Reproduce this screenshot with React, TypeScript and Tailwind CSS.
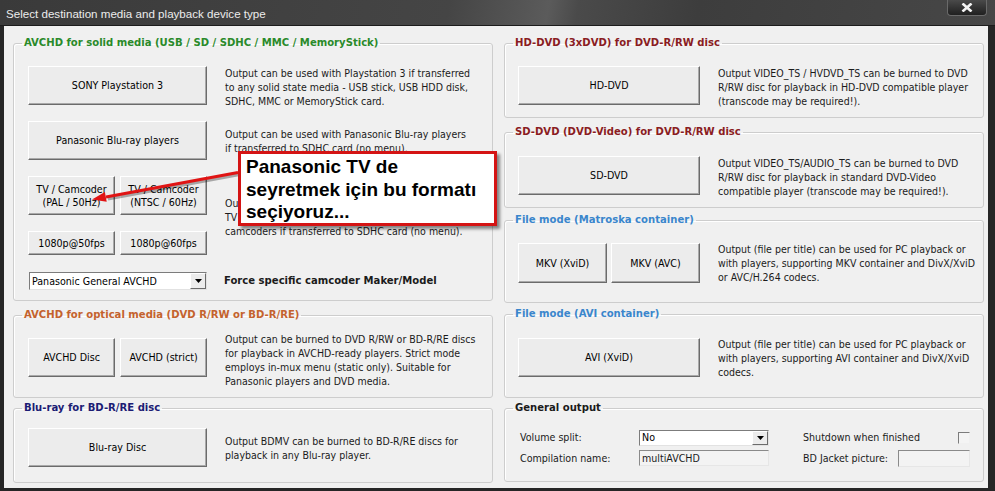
import React from "react";

const btn =
  "bg-[#ececec] border border-t-white border-l-white border-b-[#6b6b6b] border-r-[#6b6b6b] shadow-[inset_-1px_-1px_0_#a9a9a9] text-[10.6px] leading-[13px] text-black flex items-center justify-center text-center";

const desc = "ml-[18px] text-[10.5px] leading-[14px] text-[#1b1b1b] whitespace-nowrap";

function Group({
  title,
  color,
  className,
  children,
}: {
  title: string;
  color: string;
  className: string;
  children: React.ReactNode;
}) {
  return (
    <fieldset
      className={`border border-[#cdcdcd] rounded-[3px] shadow-[inset_1px_1px_0_#ffffff] ${className}`}
    >
      <legend
        className={`ml-[8px] px-[2px] text-[11.2px] leading-[14px] font-bold ${color}`}
      >
        {title}
      </legend>
      {children}
    </fieldset>
  );
}

function ComboArrow() {
  return (
    <div className="w-[16px] h-full bg-[#ececec] border border-t-white border-l-white border-b-[#6b6b6b] border-r-[#6b6b6b] flex items-center justify-center">
      <svg width="7" height="4" viewBox="0 0 7 4">
        <polygon points="0,0 7,0 3.5,4" fill="#000" />
      </svg>
    </div>
  );
}

function Combo({ value, className }: { value: string; className: string }) {
  return (
    <div
      className={`bg-white border border-t-[#7c7c7c] border-l-[#7c7c7c] border-b-[#e2e2e2] border-r-[#e2e2e2] flex items-center justify-between ${className}`}
    >
      <span className="pl-[2px] text-[10.6px] leading-[13px] text-black">{value}</span>
      <ComboArrow />
    </div>
  );
}

function Line(props: { lines: string[]; className?: string }) {
  return (
    <div className={`${desc} ${props.className ?? ""}`}>
      {props.lines.map((l, i) => (
        <div key={i}>{l}</div>
      ))}
    </div>
  );
}

export default function App() {
  return (
    <div className="relative w-[995px] h-[491px] bg-[#262626] flex flex-col overflow-hidden font-['DejaVu_Sans_Condensed','Liberation_Sans',sans-serif]">
      {/* title bar */}
      <div className="h-[26px] flex items-start justify-between bg-[linear-gradient(100deg,#3a3a3a_0%,#454545_45%,#5b5b5b_55%,#4a4a4a_58%,#3d3d3d_70%,#474747_100%)] border-b border-[#1c1c1c]">
        <span className="pl-[6px] pt-[7px] text-[11.6px] leading-[14px] text-[#ececec] font-['Liberation_Sans',sans-serif]">
          Select destination media and playback device type
        </span>
        <div className="mr-[8px] w-[40px] h-[16px] rounded-b-[4px] border border-t-0 border-[#6a6a6a] bg-gradient-to-b from-[#4a4a4a] to-[#202020] flex items-center justify-center">
          <svg width="12" height="9" viewBox="0 0 12 9">
            <path d="M1.5 0.5 L10.5 8.5 M10.5 0.5 L1.5 8.5" stroke="#f4f4f4" strokeWidth="2.6" />
          </svg>
        </div>
      </div>

      {/* client */}
      <div className="flex-1 ml-[4px] mr-[7px] mb-[3px] bg-[#f0f0f0] flex gap-[11px] pl-[9px] pt-[10px]">
        {/* left column */}
        <div className="w-[480px] flex flex-col">
          <Group title="AVCHD for solid media (USB / SD / SDHC / MMC / MemoryStick)" color="text-[#2a8a2a]" className="h-[265px]">
            <div className="pt-[16px] pl-[14px] flex flex-col">
              <div className="flex items-center h-[39px]">
                <div className={`${btn} w-[179px] h-[39px]`}>SONY Playstation 3</div>
                <Line
                  className="mt-[2px]"
                  lines={[
                    "Output can be used with Playstation 3 if transferred",
                    "to any solid state media - USB stick, USB HDD disk,",
                    "SDHC, MMC or MemoryStick card.",
                  ]}
                />
              </div>
              <div className="flex items-center h-[39px] mt-[16px]">
                <div className={`${btn} w-[179px] h-[39px]`}>Panasonic Blu-ray players</div>
                <Line
                  lines={[
                    "Output can be used with Panasonic Blu-ray players",
                    "if transferred to SDHC card (no menu).",
                  ]}
                />
              </div>
              <div className="flex items-center h-[79px] mt-[16px]">
                <div className="grid grid-cols-[87px_87px] gap-x-[5px] gap-y-[16px]">
                  <div className={`${btn} h-[39px]`}>
                    TV / Camcoder
                    <br />
                    (PAL / 50Hz)
                  </div>
                  <div className={`${btn} h-[39px]`}>
                    TV / Camcoder
                    <br />
                    (NTSC / 60Hz)
                  </div>
                  <div className={`${btn} h-[24px]`}>1080p@50fps</div>
                  <div className={`${btn} h-[24px]`}>1080p@60fps</div>
                </div>
                <Line
                  className="mt-[2px]"
                  lines={[
                    "Output can be used with AVCHD compatible players,",
                    "TV sets with SD card slot and AVCHD compatible",
                    "camcoders if transferred to SDHC card (no menu).",
                  ]}
                />
              </div>
              <div className="flex items-center h-[18px] mt-[17px]">
                <Combo value="Panasonic General AVCHD" className="w-[178px] h-[18px] ml-[1px]" />
                <span className="ml-[17px] text-[11.2px] font-bold text-[#1b1b1b]">
                  Force specific camcoder Maker/Model
                </span>
              </div>
            </div>
          </Group>

          <Group title="AVCHD for optical media (DVD R/RW or BD-R/RE)" color="text-[#c4622d]" className="mt-[7px] h-[90px]">
            <div className="pt-[10px] pl-[14px] flex items-start">
              <div className="flex gap-[5px] mt-[6px]">
                <div className={`${btn} w-[87px] h-[39px]`}>AVCHD Disc</div>
                <div className={`${btn} w-[87px] h-[39px]`}>AVCHD (strict)</div>
              </div>
              <Line
                lines={[
                  "Output can be burned to DVD R/RW or BD-R/RE discs",
                  "for playback in AVCHD-ready players. Strict mode",
                  "employs in-mux menu (static only). Suitable for",
                  "Panasonic players and DVD media.",
                ]}
              />
            </div>
          </Group>

          <Group title="Blu-ray for BD-R/RE disc" color="text-[#1c1c74]" className="mt-[3px] h-[82px]">
            <div className="pt-[13px] pl-[14px] flex items-center h-[52px]">
              <div className={`${btn} w-[179px] h-[39px]`}>Blu-ray Disc</div>
              <Line
                lines={[
                  "Output BDMV can be burned to BD-R/RE discs for",
                  "playback in any Blu-ray player.",
                ]}
              />
            </div>
          </Group>
        </div>

        {/* right column */}
        <div className="w-[480px] flex flex-col">
          <Group title="HD-DVD (3xDVD) for DVD-R/RW disc" color="text-[#8a1c22]" className="h-[82px]">
            <div className="mt-[16px] pl-[13px] flex items-center h-[39px]">
              <div className={`${btn} w-[182px] h-[39px]`}>HD-DVD</div>
              <Line
                className="mt-[2px]"
                lines={[
                  "Output VIDEO_TS / HVDVD_TS can be burned to DVD",
                  "R/RW disc for playback in HD-DVD compatible player",
                  "(transcode may be required!).",
                ]}
              />
            </div>
          </Group>

          <Group title="SD-DVD (DVD-Video) for DVD-R/RW disc" color="text-[#8a1c22]" className="mt-[7px] h-[83px]">
            <div className="mt-[17px] pl-[13px] flex items-center h-[39px]">
              <div className={`${btn} w-[182px] h-[39px]`}>SD-DVD</div>
              <Line
                className="mt-[2px]"
                lines={[
                  "Output VIDEO_TS/AUDIO_TS can be burned to DVD",
                  "R/RW disc for playback in standard DVD-Video",
                  "compatible player (transcode may be required!).",
                ]}
              />
            </div>
          </Group>

          <Group title="File mode (Matroska container)" color="text-[#3a86cc]" className="mt-[5px] h-[90px]">
            <div className="mt-[16px] pl-[13px] flex items-center h-[40px]">
              <div className="flex gap-[4px]">
                <div className={`${btn} w-[89px] h-[40px]`}>MKV (XviD)</div>
                <div className={`${btn} w-[89px] h-[40px]`}>MKV (AVC)</div>
              </div>
              <Line
                lines={[
                  "Output (file per title) can be used for PC playback or",
                  "with players, supporting MKV container and DivX/XviD",
                  "or AVC/H.264 codecs.",
                ]}
              />
            </div>
          </Group>

          <Group title="File mode (AVI container)" color="text-[#3a86cc]" className="mt-[4px] h-[91px]">
            <div className="mt-[17px] pl-[13px] flex items-center h-[39px]">
              <div className={`${btn} w-[182px] h-[39px]`}>AVI (XviD)</div>
              <Line
                lines={[
                  "Output (file per title) can be used for PC playback or",
                  "with players, supporting AVI container and DivX/XviD",
                  "codecs.",
                ]}
              />
            </div>
          </Group>

          <Group title="General output" color="text-[#1b1b1b]" className="mt-[3px] h-[81px]">
            <div className="pt-[15px] pl-[15px] flex flex-col gap-[5px] text-[10.6px] leading-[13px] text-[#1b1b1b]">
              <div className="flex items-center h-[15px]">
                <span className="w-[119px]">Volume split:</span>
                <Combo value="No" className="w-[130px] h-[16px]" />
                <span className="ml-[34px] w-[155px]">Shutdown when finished</span>
                <div className="w-[12px] h-[12px] border border-t-[#7c7c7c] border-l-[#7c7c7c] border-b-[#f0f0f0] border-r-[#f0f0f0] bg-[#f4f4f4]" />
              </div>
              <div className="flex items-center h-[16px]">
                <span className="w-[119px]">Compilation name:</span>
                <div className="w-[130px] h-[16px] pl-[2px] bg-[#f3f3f3] border border-t-[#8a8a8a] border-l-[#8a8a8a] border-b-[#e6e6e6] border-r-[#e6e6e6] flex items-center">
                  multiAVCHD
                </div>
                <span className="ml-[34px] w-[95px]">BD Jacket picture:</span>
                <div className="w-[72px] h-[17px] bg-[#f3f3f3] border border-t-[#8a8a8a] border-l-[#8a8a8a] border-b-[#e6e6e6] border-r-[#e6e6e6]" />
              </div>
            </div>
          </Group>
        </div>
      </div>

      {/* annotation arrow */}
      <svg className="absolute left-0 top-0 pointer-events-none" width="995" height="491" viewBox="0 0 995 491">
        <line x1="240" y1="174.5" x2="108" y2="199" stroke="rgba(0,0,0,0.3)" strokeWidth="3" />
        <line x1="238" y1="172.5" x2="106" y2="197" stroke="#e01414" strokeWidth="3" />
        <polygon points="92,199.5 106.7,201.8 104.9,192" fill="#e01414" />
      </svg>

      {/* annotation callout */}
      <div className="absolute left-[238px] top-[151px] w-[259px] h-[75px] bg-white border-[3px] border-[#d41414] shadow-[3px_3px_3px_rgba(0,0,0,0.45)] pl-[5px] pt-[2px] font-['Liberation_Sans',sans-serif] text-[19px] leading-[22.5px] font-bold text-black">
        <div>Panasonic TV de</div>
        <div>seyretmek için bu formatı</div>
        <div>seçiyoruz...</div>
      </div>
    </div>
  );
}
